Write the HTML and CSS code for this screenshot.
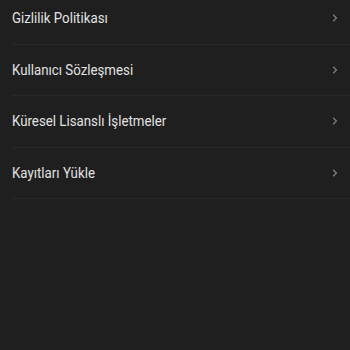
FILE: index.html
```html
<!DOCTYPE html>
<html>
<head>
<meta charset="utf-8">
<link rel="stylesheet" href="styles.css">
</head>
<body>
<div class="list">
  <div class="row"><span class="label">Gizlilik Politikası</span><svg class="chev" width="8" height="10" viewBox="0 0 8 10"><path d="M2.2 1.8 L5.4 5 L2.2 8.2" fill="none" stroke="#7d7d7d" stroke-width="1.3"/></svg></div>
  <div class="row"><span class="label">Kullanıcı Sözleşmesi</span><svg class="chev" width="8" height="10" viewBox="0 0 8 10"><path d="M2.2 1.8 L5.4 5 L2.2 8.2" fill="none" stroke="#7d7d7d" stroke-width="1.3"/></svg></div>
  <div class="row"><span class="label">Küresel Lisanslı İşletmeler</span><svg class="chev" width="8" height="10" viewBox="0 0 8 10"><path d="M2.2 1.8 L5.4 5 L2.2 8.2" fill="none" stroke="#7d7d7d" stroke-width="1.3"/></svg></div>
  <div class="row"><span class="label">Kayıtları Yükle</span><svg class="chev" width="8" height="10" viewBox="0 0 8 10"><path d="M2.2 1.8 L5.4 5 L2.2 8.2" fill="none" stroke="#7d7d7d" stroke-width="1.3"/></svg></div>
</div>
</body>
</html>
```
FILE: styles.css
```css
html, body {
  margin: 0;
  padding: 0;
  background: #1f1f1f;
  height: 100%;
  overflow: hidden;
}
.list {
  margin-top: -7px;
  margin-left: 12px;
}
.row {
  height: 50.5px;
  border-bottom: 1px solid #282828;
  display: flex;
  align-items: center;
  justify-content: space-between;
  padding-right: 11px;
}
.label {
  display: inline-block;
  font-family: Roboto, "Noto Sans", sans-serif;
  font-size: 15px;
  color: #e2e2e2;
  transform: scaleX(0.885);
  transform-origin: left center;
}
.chev {
  display: block;
}
```
